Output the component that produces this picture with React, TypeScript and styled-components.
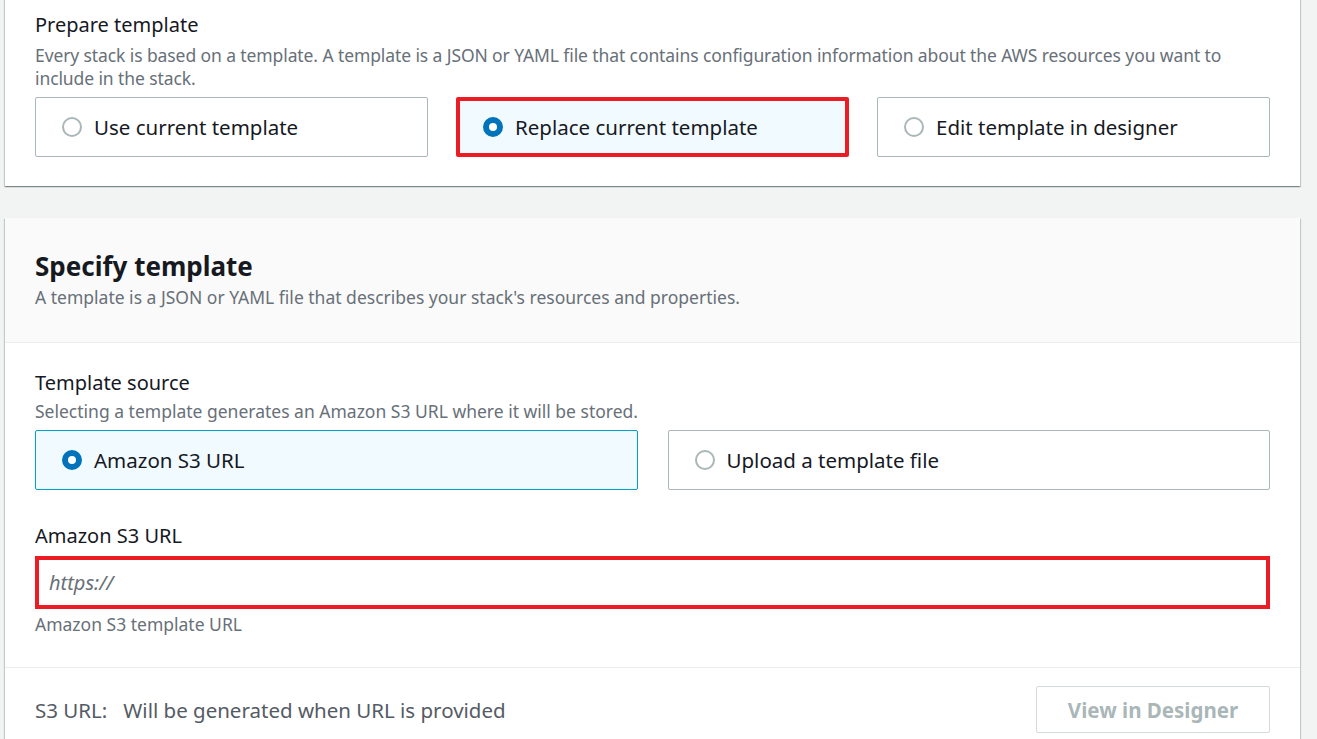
import styled, { createGlobalStyle } from 'styled-components';

const GlobalStyle = createGlobalStyle`
  html, body {
    margin: 0;
    padding: 0;
    background: #f2f3f3;
    font-family: 'Noto Sans', 'Open Sans', sans-serif;
    color: #16191f;
  }
`;

const Page = styled.div`
  width: 1317px;
  height: 739px;
  overflow: hidden;
  padding: 0 17px 0 5px;
  box-sizing: border-box;
  display: flex;
  flex-direction: column;
  gap: 32px;
`;

const Card = styled.section`
  background: #fff;
  box-shadow: 0 1px 1px 0 rgba(0, 28, 36, 0.3), 1px 1px 1px 0 rgba(0, 28, 36, 0.15),
    -1px 1px 1px 0 rgba(0, 28, 36, 0.15);
`;

const TopCard = styled(Card)`
  padding: 12px 30px 29px;
  margin-top: -2px;
`;

const CardHeader = styled.div`
  background: #fafafa;
  padding: 31px 30px 33px;
  border-bottom: 1px solid #eaeded;
`;

const CardBody = styled.div`
  padding: 25px 30px 31px;
  border-bottom: 1px solid #eaeded;
`;

const CardFooter = styled.div`
  padding: 18px 30px 18px;
  display: flex;
  align-items: center;
  justify-content: space-between;
`;

const Heading = styled.h2`
  margin: 0;
  font-size: 26px;
  font-weight: 700;
  line-height: 34px;
  color: #16191f;
`;

const Label = styled.div`
  font-size: 20px;
  line-height: 30px;
  color: #16191f;
`;

const Hint = styled.div<{ $gap?: number; $tight?: boolean }>`
  margin-top: ${(p) => p.$gap ?? 0}px;
  font-size: 17.5px;
  line-height: 23px;
  letter-spacing: ${(p) => (p.$tight ? '-0.1px' : 'normal')};
  color: #687078;
`;

const TileRow = styled.div<{ $cols: number; $gap: number }>`
  display: grid;
  grid-template-columns: repeat(${(p) => p.$cols}, 1fr);
  gap: ${(p) => p.$gap}px;
  margin-top: 7px;
`;

const Tile = styled.label<{ $selected?: boolean; $flagged?: boolean }>`
  height: 60px;
  box-sizing: border-box;
  display: flex;
  align-items: center;
  gap: 12px;
  padding-left: ${(p) => (p.$flagged ? '23px' : '26px')};
  border-radius: 2px;
  border: ${(p) =>
    p.$flagged ? '4px solid #ec1c24' : p.$selected ? '1px solid #00a1c9' : '1px solid #aab7b8'};
  background: ${(p) => (p.$selected ? '#f1faff' : '#fff')};
  font-size: 20.5px;
  color: #16191f;
`;

const Radio = styled.span<{ $checked?: boolean }>`
  width: 20px;
  height: 20px;
  border-radius: 50%;
  box-sizing: border-box;
  flex-shrink: 0;
  border: ${(p) => (p.$checked ? '6px solid #0073bb' : '2px solid #aab7b8')};
  background: #fff;
`;

const Field = styled.div`
  margin-top: 31px;
`;

const UrlInput = styled.div`
  margin-top: 5px;
  height: 53px;
  box-sizing: border-box;
  border: 4px solid #ec1c24;
  display: flex;
  align-items: center;
  padding-left: 10px;
  font-size: 20px;
  font-style: italic;
  color: #687078;
`;

const S3Line = styled.div`
  font-size: 20.5px;
  color: #545b64;
  white-space: pre;
`;

const DisabledButton = styled.button`
  width: 234px;
  height: 47px;
  border: 1px solid #d5dbdb;
  border-radius: 2px;
  background: #fff;
  color: #aab7b8;
  font-family: inherit;
  font-size: 20.5px;
  font-weight: 700;
`;

export default function App() {
  return (
    <>
      <GlobalStyle />
      <Page>
        <TopCard>
          <Label>Prepare template</Label>
          <Hint $gap={4} $tight>
            Every stack is based on a template. A template is a JSON or YAML file that contains configuration
            information about the AWS resources you want to include in the stack.
          </Hint>
          <TileRow $cols={3} $gap={28}>
            <Tile>
              <Radio />
              Use current template
            </Tile>
            <Tile $selected $flagged>
              <Radio $checked />
              Replace current template
            </Tile>
            <Tile>
              <Radio />
              Edit template in designer
            </Tile>
          </TileRow>
        </TopCard>
        <Card>
          <CardHeader>
            <Heading>Specify template</Heading>
            <Hint $gap={3}>A template is a JSON or YAML file that describes your stack's resources and properties.</Hint>
          </CardHeader>
          <CardBody>
            <Label>Template source</Label>
            <Hint $gap={2}>Selecting a template generates an Amazon S3 URL where it will be stored.</Hint>
            <TileRow $cols={2} $gap={30}>
              <Tile $selected>
                <Radio $checked />
                Amazon S3 URL
              </Tile>
              <Tile>
                <Radio />
                Upload a template file
              </Tile>
            </TileRow>
            <Field>
              <Label>Amazon S3 URL</Label>
              <UrlInput>https://</UrlInput>
              <Hint $gap={4}>Amazon S3 template URL</Hint>
            </Field>
          </CardBody>
          <CardFooter>
            <S3Line>S3 URL:   Will be generated when URL is provided</S3Line>
            <DisabledButton disabled>View in Designer</DisabledButton>
          </CardFooter>
        </Card>
      </Page>
    </>
  );
}
